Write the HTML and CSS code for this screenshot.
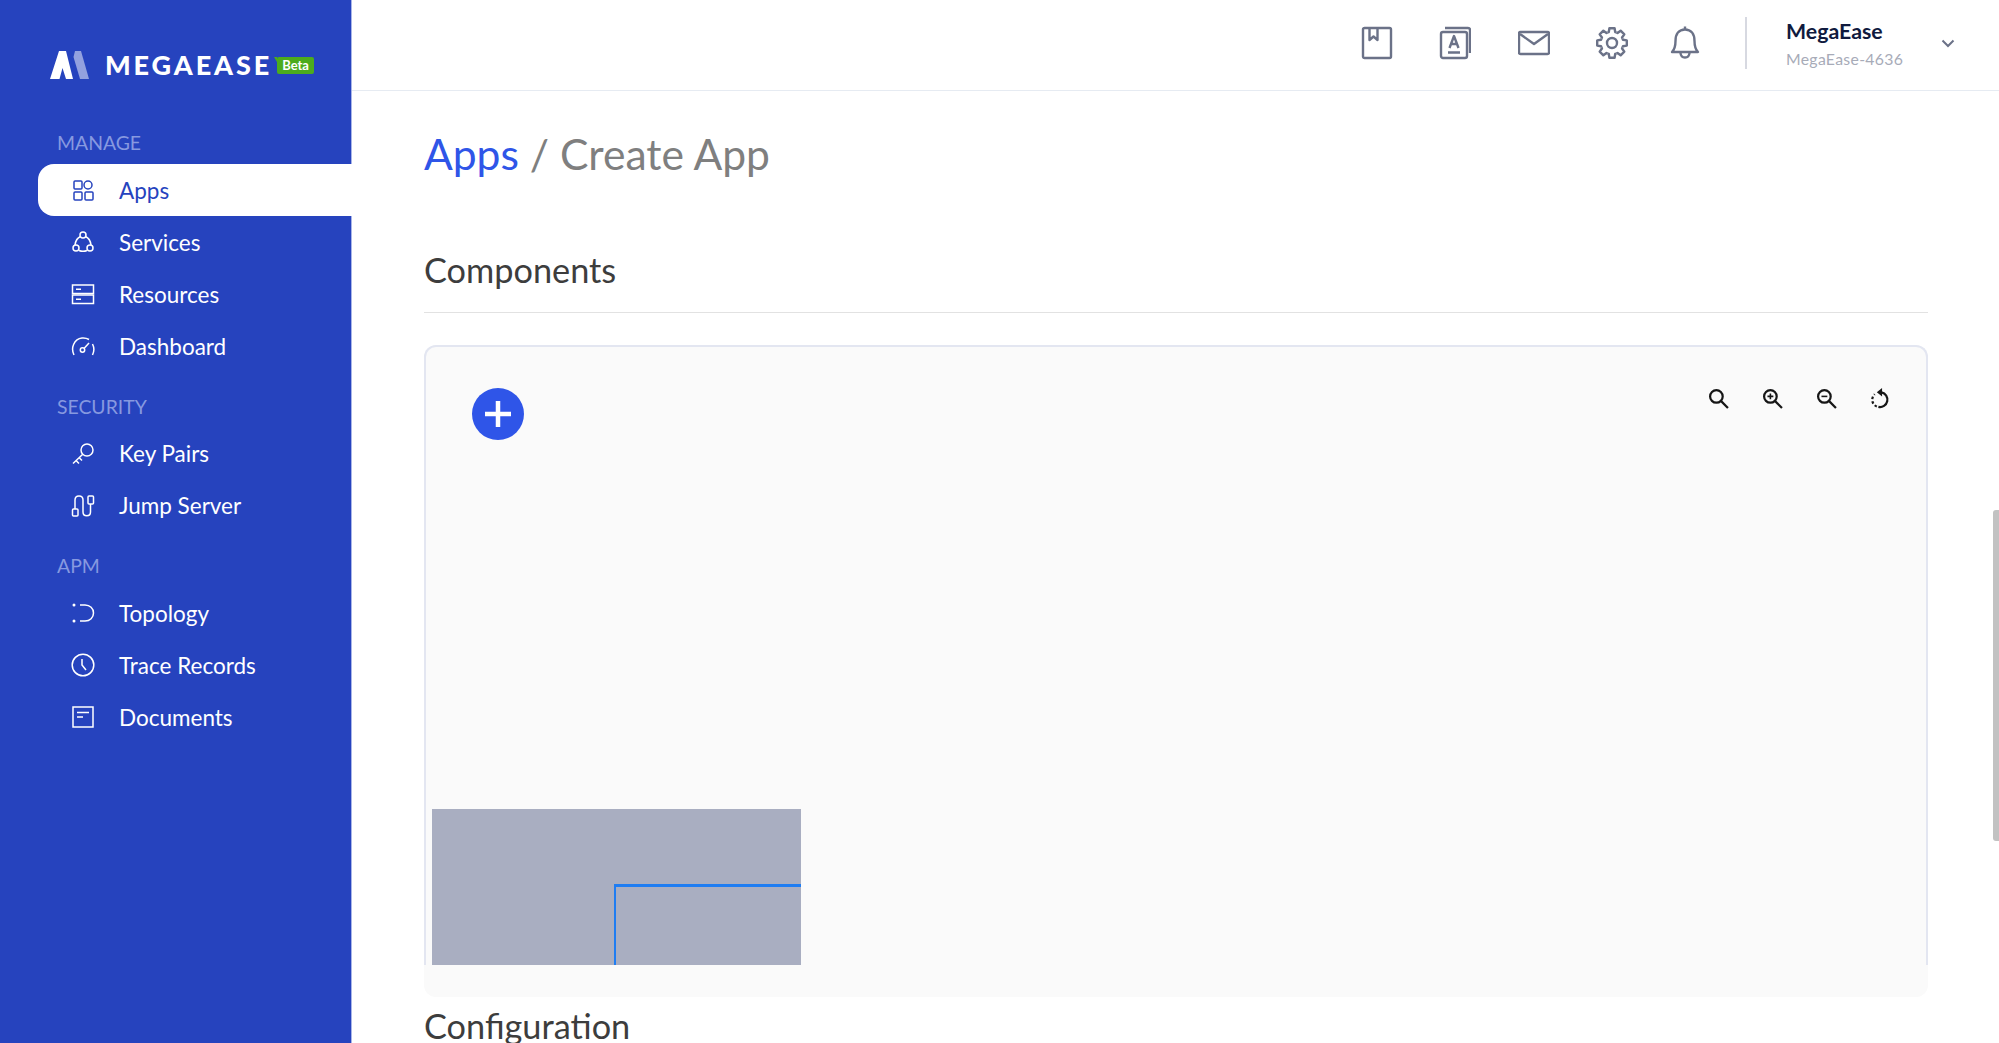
FILE: index.html
```html
<!DOCTYPE html>
<html lang="en">
<head>
  <meta charset="UTF-8" />
  <meta name="viewport" content="width=device-width, initial-scale=1.0"/>
  <title>Create App</title>
  <link rel="stylesheet" href="styles.css">
</head>
<body>
  <div class="app">

    <!-- ======= SIDEBAR ======= -->
    <aside class="sidebar">
      <div class="logo">
        <svg class="logo-mark" width="40" height="28" viewBox="0 0 40 28">
          <path d="M9 0 L16 0 L23 28 L16 28 L12.5 17 L9.5 28 L0 28 Z" fill="#fff"/>
          <path d="M25 0 L31 0 L39 28 L30 28 L23.5 6 Z" fill="#fff" opacity="0.5"/>
        </svg>
        <span class="logo-text">MEGAEASE</span>
        <span class="beta">Beta</span>
      </div>

      <div class="menu-title">MANAGE</div>
      <ul class="menu">
        <li class="menu-item active">
          <svg class="menu-icon" viewBox="0 0 24 24"><rect x="3" y="3" width="8" height="8" rx="1"/><circle cx="17" cy="7" r="4"/><rect x="3" y="14" width="8" height="8" rx="1"/><rect x="14" y="14" width="8" height="8" rx="1"/></svg>
          Apps
        </li>
        <li class="menu-item">
          <svg class="menu-icon" viewBox="0 0 24 24"><circle cx="12" cy="5" r="3"/><circle cx="5" cy="18" r="3"/><circle cx="19" cy="18" r="3"/><path d="M9.5 6.5 C6 8 4.5 11 4 15 M14.5 6.5 C18 8 19.5 11 20 15 M8 20.5 C10.5 21.5 13.5 21.5 16 20.5"/></svg>
          Services
        </li>
        <li class="menu-item">
          <svg class="menu-icon" viewBox="0 0 24 24"><rect x="1.5" y="3" width="21" height="8.5"/><rect x="1.5" y="13" width="21" height="8.5"/><path d="M5 7.2 H10 M5 17.2 H10"/></svg>
          Resources
        </li>
        <li class="menu-item">
          <svg class="menu-icon" viewBox="0 0 24 24"><path d="M3 21 C-0.5 14 3 5 11 4 C14 3.7 16 4.3 18 5.5 M21.5 10 C23.5 14 23 18 21.5 21"/><circle cx="11.5" cy="16" r="2.2"/><path d="M13 14.5 L18 9"/></svg>
          Dashboard
        </li>
      </ul>

      <div class="menu-title">SECURITY</div>
      <ul class="menu">
        <li class="menu-item">
          <svg class="menu-icon" viewBox="0 0 24 24"><circle cx="16" cy="8" r="6"/><path d="M11.5 12.5 L2 21.5 M5 18.5 L8 21.5 M8 15.5 L11 18.5"/></svg>
          Key Pairs
        </li>
        <li class="menu-item">
          <svg class="menu-icon" viewBox="0 0 24 24"><rect x="1.5" y="15" width="5.5" height="7" rx="1"/><rect x="17" y="2" width="5.5" height="8" rx="1"/><path d="M4 15 V6 C4 0.5 12 0.5 12 6 V18 C12 23 19.5 23 19.5 18 V10"/></svg>
          Jump Server
        </li>
      </ul>

      <div class="menu-title">APM</div>
      <ul class="menu">
        <li class="menu-item">
          <svg class="menu-icon" viewBox="0 0 24 24"><path d="M9 4 H14 C19 4 22.5 7.5 22.5 12 C22.5 16.5 19 20 14 20 H9"/><circle cx="3" cy="4" r="1.5" class="dot"/><circle cx="3" cy="20" r="1.5" class="dot"/></svg>
          Topology
        </li>
        <li class="menu-item">
          <svg class="menu-icon" viewBox="0 0 24 24"><circle cx="12" cy="12" r="10.8"/><path d="M11 6 V12 L15 17"/></svg>
          Trace Records
        </li>
        <li class="menu-item">
          <svg class="menu-icon" viewBox="0 0 24 24"><rect x="2" y="2" width="20" height="20"/><path d="M6 7.5 H18 M6 12 H12"/></svg>
          Documents
        </li>
      </ul>
    </aside>

    <div class="main">
      <!-- ======= TOPBAR ======= -->
      <header class="topbar">
        <svg class="top-icon" viewBox="0 0 32 34"><rect x="2" y="2" width="28" height="30" rx="1.5"/><path d="M8.5 2 V14 L12.5 10.5 L16.5 14 V2"/></svg>
        <svg class="top-icon wide-gap" viewBox="0 0 32 34"><rect x="2" y="6" width="26" height="26" rx="2"/><path d="M6 2 H29 C30 2 31 3 31 4 V27"/><path d="M10.5 22 L15 10 L19.5 22 M12 18 H18 M9 26.5 H21"/></svg>
        <svg class="top-icon" viewBox="0 0 32 34"><rect x="1" y="6" width="30" height="22" rx="1.5"/><path d="M2 8 L16 18 L30 8"/></svg>
        <svg class="top-icon gear" viewBox="0 0 32 34">
          <circle cx="16" cy="17" r="5"/>
          <path id="tooth" d="M11.6 6.4 L12.8 6 L13.4 2.2 H18.6 L19.2 6 L20.4 6.4"/>
          <use href="#tooth" transform="rotate(45 16 17)"/>
          <use href="#tooth" transform="rotate(90 16 17)"/>
          <use href="#tooth" transform="rotate(135 16 17)"/>
          <use href="#tooth" transform="rotate(180 16 17)"/>
          <use href="#tooth" transform="rotate(225 16 17)"/>
          <use href="#tooth" transform="rotate(270 16 17)"/>
          <use href="#tooth" transform="rotate(315 16 17)"/>
        </svg>
        <svg class="top-icon bell" viewBox="0 0 32 36"><path d="M3 27 C6 24 6.5 21 6.5 16 C6.5 9 10 4.5 16 4.5 C22 4.5 25.5 9 25.5 16 C25.5 21 26 24 29 27 Z"/><path d="M16 1.5 V4.5 M11.5 28 C12 34 20 34 20.5 28"/></svg>
        <div class="user">
          <div class="user-name">MegaEase</div>
          <div class="user-id">MegaEase-4636</div>
        </div>
        <svg class="chevron" width="14" height="9" viewBox="0 0 14 9"><path d="M1.5 1.5 L7 7 L12.5 1.5"/></svg>
      </header>

      <!-- ======= CONTENT ======= -->
      <main class="content">
        <h1 class="crumb"><span class="crumb-link">Apps</span> / Create App</h1>
        <h2 class="section-title">Components</h2>
        <div class="panel">
          <div class="canvas">
            <button class="add-btn">
              <svg width="26" height="26" viewBox="0 0 26 26"><path d="M13 0 V26 M0 13 H26"/></svg>
            </button>
            <div class="tools">
              <svg class="tool" viewBox="0 0 20 20"><circle cx="8" cy="8" r="6"/><path d="M12.5 12.5 L19 19"/></svg>
              <svg class="tool" viewBox="0 0 20 20"><circle cx="8" cy="8" r="6"/><path d="M12.5 12.5 L19 19"/><path class="thin" d="M5.2 8 H10.8 M8 5.2 V10.8"/></svg>
              <svg class="tool" viewBox="0 0 20 20"><circle cx="8" cy="8" r="6"/><path d="M12.5 12.5 L19 19"/><path class="thin" d="M5.2 8 H10.8"/></svg>
              <svg class="tool" viewBox="0 0 20 20"><path d="M11 4.2 A7 7 0 0 1 8 18"/><path class="dash" d="M6.5 17.7 A7 7 0 0 1 4.5 6"/><path class="fill" d="M11.5 0 L6.5 4 L11.5 8 Z"/></svg>
            </div>
            <div class="minimap">
              <div class="minimap-view"></div>
            </div>
          </div>
        </div>
        <h2 class="section-title config">Configuration</h2>
      </main>
      <div class="scroll-thumb"></div>
    </div>
  </div>
</body>
</html>
```

FILE: styles.css
```css
* {
  box-sizing: border-box;
}

html, body {
  height: 100%;
}

body {
  font-family: 'Lato', 'Noto Sans', sans-serif;
  margin: 0;
  padding: 0;
  background: #fff;
  overflow: hidden;
}

.app {
  display: flex;
  height: 100vh;
}

/* ===== SIDEBAR ===== */
.sidebar {
  width: 352px;
  flex-shrink: 0;
  background: #2643be;
  border-right: 1px solid #a9b5e8;
  padding-top: 50px;
  color: #fff;
}

.logo {
  display: flex;
  align-items: center;
  padding-left: 50px;
  height: 30px;
}

.logo-mark {
  margin-right: 15px;
}

.logo-text {
  font-size: 27px;
  font-weight: 900;
  letter-spacing: 2.9px;
  line-height: 30px;
}

.beta {
  position: relative;
  margin-left: 5px;
  width: 37px;
  height: 17px;
  border-radius: 2px;
  background: #4cab1c;
  font-size: 13px;
  font-weight: 700;
  line-height: 17px;
  text-align: center;
}

.beta::before {
  content: "";
  position: absolute;
  left: -3px;
  top: 0;
  border-top: 5px solid #4cab1c;
  border-left: 3px solid transparent;
}

.menu-title {
  padding-left: 57px;
  height: 24px;
  margin-bottom: 9px;
  font-size: 19.4px;
  line-height: 24px;
  color: #8799e0;
}

.logo + .menu-title {
  margin-top: 51px;
}

.menu {
  list-style: none;
  margin: 0 0 22.5px;
  padding: 0 0 0 38px;
}

.menu-item {
  display: flex;
  align-items: center;
  height: 52px;
  padding-left: 33px;
  font-size: 22.5px;
  border-radius: 16px 0 0 16px;
}

.menu-item.active {
  position: relative;
  margin-right: -1px;
  background: #fff;
  color: #2643be;
}

.menu-icon {
  width: 24px;
  height: 24px;
  margin-right: 24px;
  fill: none;
  stroke: currentColor;
  stroke-width: 1.5;
}

.menu-icon .dot {
  fill: currentColor;
  stroke: none;
}

/* ===== TOPBAR ===== */
.main {
  position: relative;
  flex: 1;
  min-width: 0;
  overflow: hidden;
}

.topbar {
  display: flex;
  align-items: center;
  height: 91px;
  padding-left: 1009px;
  padding-bottom: 4px;
  border-bottom: 1px solid #e6ebf2;
}

.top-icon {
  width: 32px;
  height: 34px;
  margin-right: 46px;
  flex-shrink: 0;
  fill: none;
  stroke: #6b7288;
  stroke-width: 2.4;
  stroke-linejoin: round;
}

.top-icon.wide-gap {
  margin-right: 47px;
}

.top-icon.gear {
  margin-right: 45px;
}

.top-icon.bell {
  height: 36px;
  margin-right: 0;
  margin-left: -4px;
}

.user {
  margin-left: 44px;
  padding-left: 39px;
  border-left: 2px solid #d7d9e1;
  height: 52px;
  width: 196px;
  flex-shrink: 0;
}

.user-name {
  font-size: 21.3px;
  font-weight: 700;
  color: #101a3e;
  line-height: 29px;
}

.user-id {
  font-size: 15.8px;
  color: #a7abb8;
  line-height: 25px;
  letter-spacing: 0.3px;
}

.chevron {
  flex-shrink: 0;
  fill: none;
  stroke: #6b7288;
  stroke-width: 2;
}

/* ===== CONTENT ===== */
.content {
  padding: 0 71px 0 72px;
}

.crumb {
  margin: 37px 0 0;
  font-size: 42.6px;
  font-weight: 400;
  line-height: 52px;
  color: #7f7f7f;
}

.crumb-link {
  color: #2f55e8;
}

.section-title {
  margin: 70px 0 0;
  padding-bottom: 22px;
  font-size: 34.3px;
  font-weight: 400;
  line-height: 40px;
  color: #3d3d3d;
  border-bottom: 1px solid #e2e2e2;
}

.section-title.config {
  margin-top: 9px;
  border-bottom: none;
}

.panel {
  margin-top: 32px;
  height: 652px;
  background: #fafafa;
  border-radius: 12px;
}

.canvas {
  position: relative;
  height: 620px;
  border: 2px solid #e3e6f1;
  border-bottom: none;
  border-radius: 12px 12px 0 0;
}

.add-btn {
  position: absolute;
  left: 46px;
  top: 41px;
  width: 52px;
  height: 52px;
  padding: 0;
  border: none;
  border-radius: 50%;
  background: #2f55e8;
  display: flex;
  align-items: center;
  justify-content: center;
}

.add-btn path {
  fill: none;
  stroke: #fff;
  stroke-width: 4.5;
}

.tools {
  position: absolute;
  right: 35px;
  top: 41px;
  display: flex;
  gap: 33px;
}

.tool {
  width: 21px;
  height: 21px;
  fill: none;
  stroke: #161616;
  stroke-width: 2.1;
}

.tool .thin {
  stroke-width: 1.5;
}

.tool .dash {
  stroke-dasharray: 2.4 2;
}

.tool .fill {
  fill: #161616;
  stroke: none;
}

.minimap {
  position: absolute;
  left: 6px;
  bottom: 0;
  width: 369px;
  height: 156px;
  background: #a9aec1;
}

.minimap-view {
  position: absolute;
  left: 182px;
  top: 75px;
  right: 0;
  bottom: 0;
  border-top: 3px solid #1f7df2;
  border-left: 2px solid #1f7df2;
}

.scroll-thumb {
  position: absolute;
  right: 0;
  top: 510px;
  width: 6px;
  height: 331px;
  border-radius: 3px 0 0 3px;
  background: #c2c2c2;
}
```
